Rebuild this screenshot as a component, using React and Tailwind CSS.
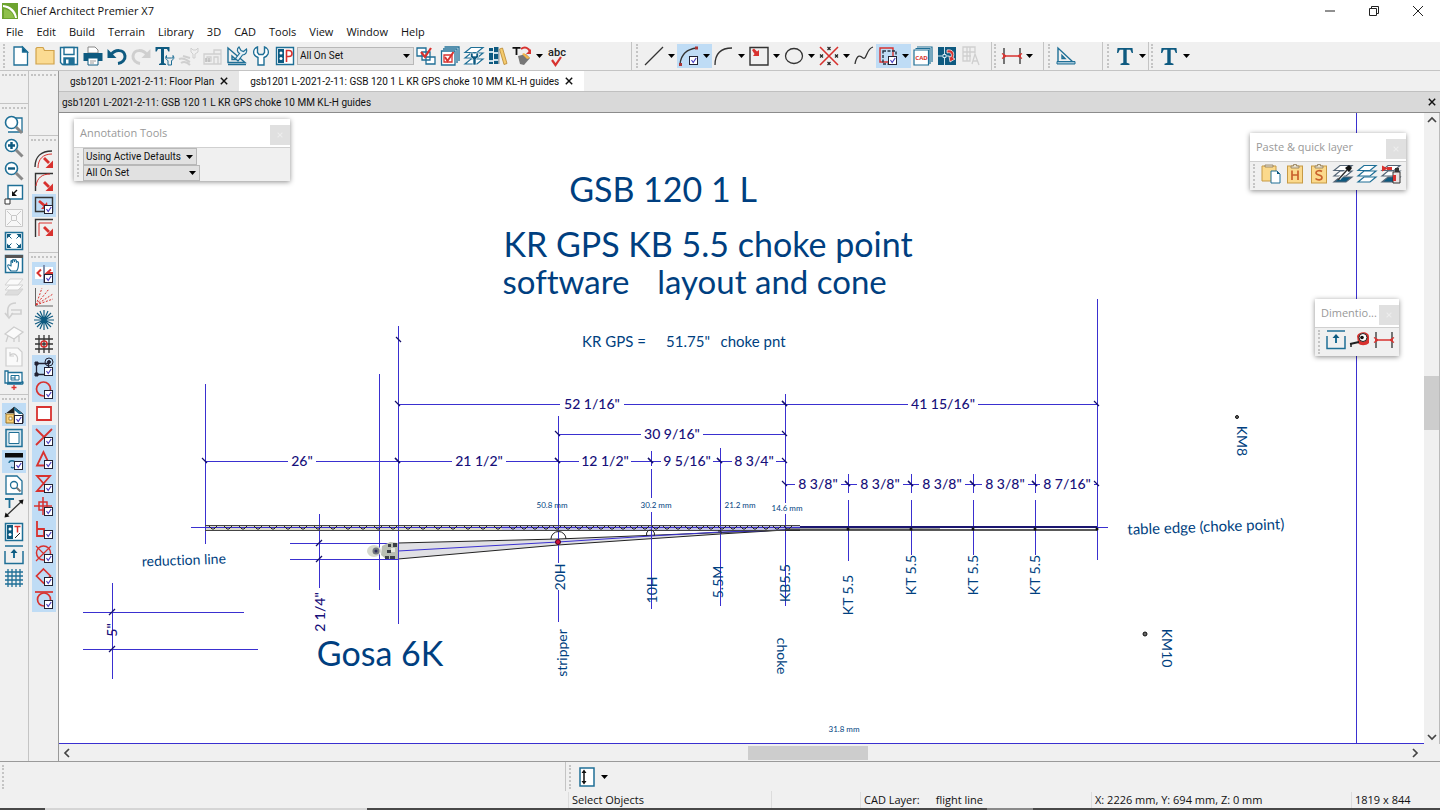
import { useState } from "react";
import clsx from "clsx";

const BLUE = "#1f6f96";
const DEEP = "#0e5a80";
const RED = "#d8322f";
const INK = "#333333";
const FADED = "#cfcfcf";

const UI = "font-['Open_Sans','Noto_Sans',sans-serif]";
const TABS = "font-[Roboto,'Noto_Sans',sans-serif]";

const Check = () => (
  <g>
    <rect x="12.5" y="12.5" width="8" height="8" fill="#fff" stroke="#223" strokeWidth="1" />
    <path d="M14.500 16l1.700 2.500 3-4.500" fill="none" stroke="#4a3fc0" strokeWidth="1.200" />
  </g>
);

const Sheets = ({ color = BLUE, fill = "#fff" }) => (
  <g stroke={color} strokeWidth="1.200">
    <path d="M3 20l6-5h12l-6 5z" fill={fill} />
    <path d="M3 14l6-5h12l-6 5z" fill="#fff" />
    <path d="M3 8.500l6-5h12l-6 5z" fill="#fff" />
  </g>
);

const Clip = ({ children }) => (
  <g>
    <rect x="4.500" y="4" width="15" height="17" fill="#fbd98c" stroke="#c79a45" />
    <path d="M8 6V4h2.500V2.500h3V4H16v2z" fill="#e9e2cf" stroke="#8d7a55" strokeWidth=".8" />
    {children}
  </g>
);

const wrench = "M8.500 3c-3 1-4.500 4-3.500 7 .6 1.600 2 2.800 4 3.500V21h6v-7.500c2-.7 3.400-1.900 4-3.500 1-3-.5-6-3.500-7v5.500L14 10.500h-4L8.500 8.500z";

const icons = {
  newFile: (
    <g stroke={BLUE} strokeWidth="1.300" fill="#fff">
      <path d="M5 3h8.500l5 5v13H5z" />
      <path d="M13.500 3v5h5z" fill={DEEP} />
    </g>
  ),
  open: <path d="M3 20V4.500l1-1h6l1.500 3H21V20z" fill="#fbdb92" stroke="#d0a24b" strokeWidth="1.200" />,
  save: (
    <g stroke={BLUE} strokeWidth="1.400" fill="#fff">
      <path d="M3.500 3.500h17v17h-15l-2-2z" />
      <path d="M7 3.500h10v7H7z" />
      <path d="M7 14h10v6.500H7z" fill={BLUE} />
      <path d="M9 15.500h2.500v4H9z" stroke="none" />
    </g>
  ),
  print: (
    <g>
      <path d="M7 9V3h7l3 3v3z" fill="#fff" stroke="#888" />
      <path d="M2.500 9h19v8h-19z" fill={DEEP} />
      <path d="M7 14h10v7H7z" fill="#fff" stroke={DEEP} />
      <path d="M9 17h6M9 19h4" stroke="#999" />
    </g>
  ),
  undo: (
    <g fill="none" stroke={DEEP} strokeWidth="3">
      <path d="M6 11c4-6 13-6 14 1 .5 4-3 7-7 7.500" />
      <path d="M2.500 5v9h9z" fill={DEEP} stroke="none" />
    </g>
  ),
  redo: (
    <g fill="none" stroke={FADED} strokeWidth="3">
      <path d="M18 11C14 5 5 5 4 12c-.5 4 3 7 7 7.500" />
      <path d="M21.500 5v9h-9z" fill={FADED} stroke="none" />
    </g>
  ),
  textTool: (
    <g fill={DEEP}>
      <path d="M2.500 3h14v4.500h-1.200L14 5h-3v14l2 1v1H6v-1l2-1V5H5L3.700 7.500H2.500z" />
      <path d="M13.500 11.500c-1.500 2-1 4 1.500 5v4.500h3.500v-4.500c2.500-1 3-3 1.500-5v2.500h-1.500-3.500-1.500z" fill="#eee" stroke={BLUE} />
    </g>
  ),
  deckTool: (
    <g fill="none" stroke={FADED}>
      <path d="M2 15c5-2 7 1 11 3M4 19c3-2 6-1 9 2M6 12l7 2" strokeWidth="2" />
      <path d="M14 4v4l2 2v4h2v-4l3-2V4l-2 2h-3z" />
    </g>
  ),
  houseTool: (
    <g fill="#eee" stroke={FADED} strokeWidth="1.300">
      <path d="M3 10h17v10H3zM6 13h4v4H6zM13 13h4v7h-4zM13 10V6h7v4" />
      <path d="M5 14v4M8 14v4" strokeWidth="1.500" stroke="#bbb" />
    </g>
  ),
  squareTool: (
    <g fill="none" stroke={BLUE} strokeWidth="1.400">
      <path d="M3 4v14.500h17zM7 12v3.500h4zM3 20.500h18" />
      <path d="M14 3c-2.500 2-2 5 .5 6.500l-4 5 2.500 2.500 4.500-6c3 0 5-3 4-6l-3 2.500-2.500-1z" strokeWidth="1.200" fill="#e7f0f5" />
    </g>
  ),
  wrench: <path d={wrench} fill="#fff" stroke={BLUE} strokeWidth="1.400" />,
  pageP: (
    <g>
      <path d="M3.500 3.500h17v17h-17z" fill="#fff" stroke={BLUE} strokeWidth="1.400" />
      <path d="M5 5h6v14H5z" fill={DEEP} />
      <circle cx="8" cy="9" r="1.500" fill="#fff" />
      <circle cx="8" cy="14.500" r="1.500" fill="#fff" />
      <path d="M13.500 18V6.500h2.500c4 0 4 6 0 6h-2" fill="none" stroke={RED} strokeWidth="1.600" />
    </g>
  ),
  selectSet: (
    <g fill="#fff" stroke={BLUE} strokeWidth="1.300">
      <path d="M3 4h9v8H3zM8 8h8v8H8zM12 13h9v7h-9z" />
      <path d="M7 8l4 5 6-9" fill="none" stroke={RED} strokeWidth="2.200" />
    </g>
  ),
  checkBox: (
    <g fill="#fff" stroke={BLUE} strokeWidth="1.300">
      <path d="M6.500 3h14.500v14M5 5h14v14M3.500 7h13.500v14H3.500z" />
      <path d="M6 11h8v7H6z" stroke={RED} />
      <path d="M7 13l2.500 4 6-9" fill="none" stroke={RED} strokeWidth="2" />
    </g>
  ),
  layerTool: (
    <g>
      <Sheets />
      <path d="M8.500 9v4l2.500 2v6h3v-6l2.500-2V9h-2.500v3h-3V9z" fill={DEEP} stroke="#fff" strokeWidth=".6" />
    </g>
  ),
  library: (
    <g>
      <path d="M3 4h4v16H3zM8 3h4.500v17H8z" fill={DEEP} />
      <path d="M3 8h4M8 9h4.500M3 17h4M8 16h4.500" stroke="#c8dfea" strokeWidth="2" />
      <path d="M13.500 5l3-1 4.500 15.500-3 1z" fill="#f4cb6e" stroke="#b98730" strokeWidth=".8" />
      <path d="M13 5v15" stroke="#999" />
    </g>
  ),
  textPaint: (
    <g>
      <path d="M2.500 3h8v1.800H7.400V11H5.600V4.800H2.500z" fill="#111" />
      <path d="M11 5c4-3 8-1 9 3" fill="none" stroke={RED} strokeWidth="2" />
      <path d="M21 5v5h-5z" fill={RED} />
      <path d="M8 12l8-2 4 4-6 7-4-1z" fill="#777" />
      <path d="M14 9l6 5-3 1-5-5z" fill="#f3b64c" />
    </g>
  ),
  spell: (
    <g>
      <text x="12" y="12" textAnchor="middle" fontSize="11" fontWeight="500" fill="#222" fontFamily="Roboto">abc</text>
      <path d="M7 16l3.500 5L16 13" fill="none" stroke={RED} strokeWidth="2.200" />
    </g>
  ),
  line: <path d="M3 21L21 3" stroke={INK} strokeWidth="1.300" />,
  arcEdit: (
    <g>
      <path d="M3 20C4 11 10 5 20 4" fill="none" stroke={INK} strokeWidth="1.300" />
      <path d="M2 19h3v3H2zM18 2.500h3v3h-3z" fill="#a33" />
      <Check />
    </g>
  ),
  arc: <path d="M3 21C3 10 9 4 20 4" fill="none" stroke={INK} strokeWidth="1.300" />,
  boxArrow: (
    <g>
      <path d="M3 3.500h18v17.500H3z" fill="none" stroke={INK} strokeWidth="1.400" />
      <path d="M5 6l2-1.500 3 3L12 6v6H6l1.500-2z" fill={RED} />
    </g>
  ),
  circle: <ellipse cx="12" cy="12" rx="8.500" ry="7.500" fill="none" stroke={INK} strokeWidth="1.300" />,
  cross: (
    <g fill="none">
      <path d="M3 3l18 18M21 3L3 21" stroke={RED} strokeWidth="1.600" />
      <path d="M10.500 3l3 3m0-3l-3 3M10.500 18l3 3m0-3l-3 3M3 10.500l3 3m0-3l-3 3M18 10.500l3 3m0-3l-3 3" stroke="#222" strokeWidth="1.200" />
    </g>
  ),
  spline: <path d="M3 20c2-11 6-8 8-6 4 2 3-9 10-11" fill="none" stroke={INK} strokeWidth="1.300" />,
  cadBlock: (
    <g fill="none">
      <path d="M4 4h13v14H4z" stroke={RED} strokeWidth="1.400" />
      <path d="M7 7h13v13H7z" stroke="#234" strokeWidth="1.400" strokeDasharray="3 1.500" />
      <Check />
    </g>
  ),
  cad: (
    <g fill="#fff" stroke={BLUE} strokeWidth="1.200">
      <path d="M6 3h15v15M4.500 4.500H19V20M3 6h14.500v15H3z" />
      <text x="10.500" y="16" textAnchor="middle" fontSize="6" fontWeight="700" fill={RED} stroke="none" fontFamily="Noto Sans">CAD</text>
    </g>
  ),
  cadDetail: (
    <g>
      <path d="M3 3h18v18H3z" fill={DEEP} />
      <path d="M3 12h5m3 0h3M9.500 3v7m0 4v7M8 10.500h3v3H8z" stroke="#cfe4ee" fill="none" />
      <path d="M12 6c6-1 8 3 6 8l2 1-5 3-1-6 2 1c1-3 0-5-4-4z" fill={RED} stroke="#fff" strokeWidth=".7" />
    </g>
  ),
  plotA: (
    <g fill="none" stroke={FADED} strokeWidth="1.300">
      <path d="M4 3h7v14H4zM4 8h12M4 12h8M11 3l5 0v6M8 3v14M13 20l3-10 4 11M14 17h5" />
    </g>
  ),
  dim: (
    <g fill="none">
      <path d="M4 4v16M20 4v16" stroke="#555" strokeWidth="1.600" />
      <path d="M3 12h18M2 9.500l4 2.500-4 2.500M22 9.500L18 12l4 2.500" stroke={RED} strokeWidth="1.400" />
    </g>
  ),
  triangle: (
    <g fill="none" stroke={BLUE} strokeWidth="1.400">
      <path d="M4 4v14h15zM8 11.500v3h3z" />
      <path d="M3 17.500h18v2.500H3z" fill="#9fc3d6" strokeWidth="1" />
    </g>
  ),
  bigT: <path d="M4.500 4h15l.5 5h-1.200l-1.500-3.200h-3.600v13l2.800 1V21h-9v-1.200l2.800-1v-13H6.700L5.200 9H4z" fill={DEEP} />,
  zoomArea: (
    <g>
      <path d="M8 5h12v14H6" fill="#fff" stroke={BLUE} strokeWidth="1.300" />
      <circle cx="9.500" cy="9.500" r="6" fill="#fff" stroke={BLUE} strokeWidth="1.600" />
      <path d="M14 14l6 6" stroke="#888" strokeWidth="3" />
    </g>
  ),
  zoomIn: (
    <g>
      <circle cx="9.500" cy="9.500" r="6" fill="#fff" stroke={BLUE} strokeWidth="1.600" />
      <path d="M6 9.500h7M9.500 6v7" stroke={DEEP} strokeWidth="2.400" />
      <path d="M14 14l6.500 6.500" stroke="#888" strokeWidth="3" />
    </g>
  ),
  zoomOut: (
    <g>
      <circle cx="9.500" cy="9.500" r="6" fill="#fff" stroke={BLUE} strokeWidth="1.600" />
      <path d="M6 9.500h7" stroke={DEEP} strokeWidth="2.400" />
      <path d="M14 14l6.500 6.500" stroke="#888" strokeWidth="3" />
    </g>
  ),
  shrink: (
    <g>
      <path d="M6 3.500h14.500V17H6z" fill="#fff" stroke={BLUE} strokeWidth="1.400" />
      <path d="M3 17h5v5H3z" fill="#fff" stroke={INK} />
      <path d="M15 8l-4 4" stroke="#111" strokeWidth="1.500" />
      <path d="M10 9v5h5z" fill="#111" />
    </g>
  ),
  fitOff: (
    <g fill="#f7f7f7" stroke="#c8c8c8">
      <path d="M3.500 3.500h17v17h-17z" />
      <path d="M9.500 9.500h5v5h-5zM5 5l4 4M19 5l-4 4M5 19l4-4M19 19l-4-4" />
    </g>
  ),
  fit: (
    <g>
      <path d="M3.500 3.500h17v17h-17z" fill="#fff" stroke={BLUE} strokeWidth="1.600" />
      <path d="M5 5h4.500L5 9.500zM19 5h-4.500l4.500 4.500zM5 19h4.500L5 14.500zM19 19h-4.500l4.500-4.500z" fill={DEEP} />
      <path d="M6 6l3.500 3.500M18 6l-3.500 3.500M6 18l3.500-3.500M18 18l-3.500-3.500" stroke={DEEP} />
    </g>
  ),
  pan: (
    <g>
      <path d="M3.500 3.500h17v17h-17z" fill="#fff" stroke={BLUE} strokeWidth="1.500" />
      <path d="M3 3h18v3H3z" fill="#555" />
      <path d="M9 19c-2-2-4-5-3-6s2 1 3 1V9c1-1 1.500 0 1.500 2V8c1-1 2 0 2 2V8c1-1 2 0 2 2v0c1-1 2 0 2 1 0 4 0 6-2 8z" fill="#fff" stroke={BLUE} strokeWidth="1.200" />
    </g>
  ),
  sheetsOff: (
    <g fill="#fafafa" stroke="#d3d3d3">
      <path d="M3 20l5-6h13l-5 6z" fill="#ddd" />
      <path d="M3 15l5-5h13l-5 5z" />
      <path d="M3 10l5-6h13l-5 6z" />
    </g>
  ),
  backOff: <path d="M14 4C6 4 5 9 6 17M3 14l4 5 4-5M9 11h10v4H9" fill="none" stroke={FADED} strokeWidth="1.600" />,
  planeOff: <path d="M3 12l9-7 9 5-9 7zM6 14l-2 6M17 14v6M12 17v3" fill="#fafafa" stroke="#cdcdcd" strokeWidth="1.300" />,
  cycleOff: (
    <g fill="#fafafa" stroke="#cdcdcd" strokeWidth="1.200">
      <path d="M4 3h12l4 4v14H4z" />
      <path d="M8 10c5-3 9 1 7 7M8 7v4h4" fill="none" />
    </g>
  ),
  blueprint: (
    <g fill="none" stroke={BLUE} strokeWidth="1.300">
      <path d="M3 3h3v12H3zM6 4.500h14v10H6zM20 13c2 1 1 4-1 3H5" fill="#fff" />
      <path d="M9 7.500h8v4.500H9zM13 7.500V12M9 10h4" strokeWidth="1" />
      <path d="M12 17v5M9.500 19.500h5" stroke={RED} />
    </g>
  ),
  house: (
    <g>
      <path d="M12 4l9 7v9h-9z" fill="#fff" stroke="#222" />
      <path d="M3 11l9-7v6H3z" fill="#222" />
      <path d="M4 11h8v9H4z" fill="#f7cf78" stroke="#9b7428" />
      <path d="M7 14h3v3H7z" fill="#fff" stroke="#9b7428" strokeWidth=".8" />
      <path d="M12 4l9 7h-4l-5-4z" fill={BLUE} />
      <Check />
    </g>
  ),
  frame: (
    <g fill="#fff" stroke={BLUE}>
      <path d="M4 3.500h16v17H4z" strokeWidth="1.500" fill="#d6e6ee" />
      <path d="M7 6.500h10v11H7z" />
    </g>
  ),
  refLine: (
    <g>
      <path d="M3 4h18v4.500H3z" fill="#0b0b0b" />
      <path d="M7 14c0-3 6-3 6 0M9 18c2 2 5 0 4-2" fill="none" stroke={BLUE} strokeWidth="1.300" />
      <Check />
    </g>
  ),
  preview: (
    <g fill="#fff" stroke={BLUE} strokeWidth="1.300">
      <path d="M4 3h11l5 5v13H4z" />
      <circle cx="12" cy="12" r="3.500" />
      <path d="M14.500 14.500l4 4" stroke="#777" strokeWidth="2" />
    </g>
  ),
  tLine: (
    <g>
      <path d="M3 3h9M7.500 3v9" stroke={BLUE} strokeWidth="1.800" />
      <path d="M4 20L20 5" stroke={INK} strokeWidth="1.300" />
      <path d="M2.500 21.500l1-5 4 4zM21.500 3.500l-1 5-4-4z" fill="#111" />
    </g>
  ),
  pageT: (
    <g>
      <path d="M3.500 3.500h17v17h-17z" fill="#fff" stroke={BLUE} strokeWidth="1.500" />
      <path d="M5 5h6v14H5z" fill={DEEP} />
      <circle cx="8" cy="9" r="1.500" fill="#fff" />
      <circle cx="8" cy="14.500" r="1.500" fill="#fff" />
      <path d="M12.500 6.500h6M15.500 6.500v6" stroke={RED} strokeWidth="1.500" />
      <path d="M13 18l5-5" stroke="#222" />
    </g>
  ),
  upBox: (
    <g fill="none" stroke={BLUE} strokeWidth="1.500">
      <path d="M3 3h18M3 8v12.500h18V8" />
      <path d="M12 15V8" strokeWidth="2" />
      <path d="M8.500 10L12 6l3.500 4z" fill={DEEP} stroke="none" />
    </g>
  ),
  grid: <path d="M6 3v18M10 3v18M14 3v18M18 3v18M3 6h18M3 10h18M3 14h18M3 18h18" stroke={BLUE} strokeWidth="1.300" />,
  arcA: (
    <g fill="none">
      <path d="M3 20C3 10 9 4 20 4" stroke={INK} strokeWidth="1.400" />
      <path d="M6 21C6 12 11 7 20 7" stroke={RED} />
      <path d="M12 11l5 5" stroke={RED} strokeWidth="2.800" />
      <path d="M21 21h-7.500l7.500-7.500z" fill={RED} />
    </g>
  ),
  arcB: (
    <g fill="none">
      <path d="M3.500 21V3.500H21" stroke={INK} strokeWidth="1.400" />
      <path d="M4 16C5 8 10 4 18 4" stroke={RED} />
      <path d="M12 12l5 5" stroke={RED} strokeWidth="2.800" />
      <path d="M21 21h-7.500l7.500-7.500z" fill={RED} />
    </g>
  ),
  boxRed: (
    <g fill="none">
      <path d="M3.500 4.500h17v14h-17z" stroke={INK} strokeWidth="1.400" />
      <path d="M7 8l6 5" stroke={RED} strokeWidth="2.800" />
      <path d="M16 16H9l6-7z" fill={RED} />
      <Check />
    </g>
  ),
  cornerB: (
    <g fill="none">
      <path d="M3.500 21V3.500H21" stroke={INK} strokeWidth="1.400" />
      <path d="M7 20V7h13" stroke={RED} />
      <path d="M12 11l5 5" stroke={RED} strokeWidth="2.800" />
      <path d="M21 20h-7.500l7.500-7.500z" fill={RED} />
    </g>
  ),
  mirror: (
    <g>
      <path d="M3 5h8v12H3zM13 5h8v12h-8z" fill="#fff" />
      <path d="M9 7.500L5.500 11 9 14.500M19 7.500L15 11h6" fill="none" stroke={RED} strokeWidth="2" />
      <path d="M12 3v18" stroke="#446" />
      <Check />
    </g>
  ),
  rays: (
    <g fill="none">
      <path d="M3.500 3v18H21" stroke="#666" />
      <path d="M4 20L10 3M4 20L17 4M4 20L21 9M4 20l17-6" stroke={RED} strokeDasharray="2 1.500" />
    </g>
  ),
  burst: <path d="M12 2v20M2 12h20M5 5l14 14M19 5L5 19M8 3l8 18M16 3L8 21M3 8l18 8M3 16l18-8" stroke={DEEP} strokeWidth="1.200" />,
  gridSnap: (
    <g fill="none">
      <path d="M7 3v18M12 3v18M17 3v18M3 7h18M3 12h18M3 17h18" stroke={INK} strokeWidth="1.300" />
      <circle cx="12" cy="12" r="3" stroke={RED} strokeWidth="1.500" />
    </g>
  ),
  objSnap: (
    <g fill="none" stroke="#223">
      <path d="M4.500 8.500h12v11h-12z" strokeWidth="1.300" />
      <path d="M3 7h3v3H3zM3 18h3v3H3z" fill="#223" />
      <circle cx="17" cy="7" r="4" />
      <circle cx="17" cy="7" r="1.500" fill="#223" />
      <Check />
    </g>
  ),
  snapCircle: <g><circle cx="11.500" cy="11" r="7" fill="none" stroke={RED} strokeWidth="1.700" /><Check /></g>,
  snapSquare: <path d="M5 5h14v13H5z" fill="#fff" stroke={RED} strokeWidth="1.800" />,
  snapX: <g><path d="M4 4l16 16M20 4L4 20" stroke={RED} strokeWidth="1.800" /><Check /></g>,
  snapTri: <g><path d="M11.500 4L5 17.500h13z" fill="none" stroke={RED} strokeWidth="1.800" /><Check /></g>,
  snapHour: <g><path d="M5 4h13L5 19h13z" fill="none" stroke={RED} strokeWidth="1.800" /><Check /></g>,
  snapPlus: (
    <g fill="none" stroke={RED} strokeWidth="1.500">
      <path d="M11 2v18M2 11h18M7 7h8v8H7z" />
      <Check />
    </g>
  ),
  snapPerp: (
    <g fill="none" stroke={RED} strokeWidth="1.800">
      <path d="M5 3v15h14M5 11h7v7" />
      <Check />
    </g>
  ),
  snapQuad: (
    <g fill="none" stroke={RED} strokeWidth="1.500">
      <circle cx="11.500" cy="11" r="7" />
      <path d="M4 4l15 15M19 4L4 19" strokeWidth="1.200" />
      <Check />
    </g>
  ),
  snapDiamond: <g><path d="M11.500 4l7 7-7 7-7-7z" fill="none" stroke={RED} strokeWidth="1.700" /><Check /></g>,
  snapTan: (
    <g fill="none" stroke={RED} strokeWidth="1.700">
      <path d="M3 4h18" />
      <circle cx="12" cy="11.500" r="6.500" />
      <Check />
    </g>
  ),
  paste: (
    <g>
      <path d="M3 4h14v15H3z" fill="#fbd98c" stroke="#c79a45" />
      <path d="M6 5h8V3H6z" fill="#e9e2cf" stroke="#8d7a55" strokeWidth=".8" />
      <path d="M12 9h6l3 3v9h-9z" fill="#fff" stroke={BLUE} />
      <path d="M18 9v3h3z" fill={DEEP} />
    </g>
  ),
  pasteH: <Clip><path d="M9 8.500V18M15 8.500V18M9 13h6" stroke="#c9602c" strokeWidth="1.700" /></Clip>,
  pasteS: <Clip><path d="M15 9.500c-2-1.500-6-1-6 1.500s6 1.500 6 4.500-4.500 3-6.500 1" fill="none" stroke="#c9602c" strokeWidth="1.600" /></Clip>,
  eyedrop: (
    <g>
      <Sheets fill={DEEP} color="#567" />
      <path d="M8 17l8-9" stroke="#fff" strokeWidth="3" />
      <path d="M7 18l9-10" stroke="#333" strokeWidth="1.500" />
      <path d="M14 6l4 4 3-4-3-3z" fill="#111" />
    </g>
  ),
  sheets: <Sheets />,
  spray: (
    <g>
      <Sheets fill={DEEP} color="#567" />
      <path d="M3 3.500l6 3-6 3zM8 5h5v3H8z" fill={RED} />
      <path d="M14 10h7v11h-7z" fill="#e9e2e2" stroke="#333" />
      <path d="M14 13h3v6h-3z" fill={RED} />
      <path d="M16 6h4v4h-4z" fill="#333" />
    </g>
  ),
  tape: (
    <g>
      <path d="M9 8c2-5 12-5 12 1v6c-3 3-9 3-11 0z" fill={RED} />
      <circle cx="15" cy="9.500" r="4" fill="#fff" stroke="#222" />
      <circle cx="14" cy="9.500" r="1.800" fill="#111" />
      <path d="M2 16l9-2" stroke="#222" strokeWidth="2" />
      <path d="M3 15v4" stroke="#222" strokeWidth="1.500" />
    </g>
  ),
  height: (
    <g>
      <path d="M5 3h14v18H5z" fill="#fff" stroke={BLUE} strokeWidth="1.500" />
      <path d="M9 6v12" stroke="#111" strokeWidth="1.500" />
      <path d="M6.500 8L9 4.500 11.500 8zM6.500 16L9 19.500l2.500-3.500z" fill="#111" />
    </g>
  ),
};

const Icon = ({ name }) => (
  <svg viewBox="0 0 24 24" className="h-6 w-6 shrink-0 overflow-visible" aria-hidden="true">
    {icons[name]}
  </svg>
);

const Caret = () => (
  <svg viewBox="0 0 7 4" className="h-1 w-[7px] shrink-0" aria-hidden="true">
    <path d="M0 0h7L3.500 4z" fill="#000" />
  </svg>
);

const Tool = ({ name, menu, on }) => (
  <button aria-label={name} className={clsx("flex h-6 items-center", menu ? "w-[35px] gap-0.5" : "w-6", on && "bg-[#bfdcf5]")}>
    <Icon name={name} />
    {menu && <Caret />}
  </button>
);

const Grip = () => <div className="mr-1 h-6 w-0 border-l-2 border-dotted border-[#c4c4c4]" />;
const HGrip = () => (
  <div className="px-0.5 py-[3px]">
    <div className="border-t-2 border-dotted border-[#c4c4c4]" />
  </div>
);

const Combo = ({ label, value, className }) => (
  <label className={clsx("relative flex items-center border border-[#b8b8b8] bg-[#e1e1e1]", className)}>
    <select aria-label={label} className={clsx("h-full w-full appearance-none px-0.5 text-[10px] leading-none text-[#111] outline-none", TABS)}>
      <option>{value}</option>
    </select>
    <span className="pointer-events-none absolute right-[3px] flex">
      <Caret />
    </span>
  </label>
);

const X = ({ className }) => (
  <svg viewBox="0 0 10 10" className={className} aria-hidden="true">
    <path d="M1 1l8 8M9 1L1 9" stroke="currentColor" strokeWidth="1.800" />
  </svg>
);

const menus = ["File", "Edit", "Build", "Terrain", "Library", "3D", "CAD", "Tools", "View", "Window", "Help"];

const fileTools = ["newFile", "open", "save", "print", "undo", "redo", "textTool", "deckTool", "houseTool", "squareTool", "wrench", "pageP"];

const leftTop = ["zoomArea", "zoomIn", "zoomOut", "shrink", "fitOff", "fit", "pan", "sheetsOff", "backOff", "planeOff", "cycleOff", "blueprint"];
const leftBottom = ["house", "frame", "refLine", "preview", "tLine", "pageT", "upBox", "grid"];
const editTools = ["arcA", "arcB", "boxRed", "cornerB"];
const snapTools = ["mirror", "rays", "burst", "gridSnap", "objSnap", "snapCircle", "snapSquare", "snapX", "snapTri", "snapHour", "snapPlus", "snapPerp", "snapQuad", "snapDiamond", "snapTan"];
const active = ["house", "refLine", "boxRed", "mirror", "objSnap", "snapCircle", "snapX", "snapTri", "snapHour", "snapPlus", "snapPerp", "snapQuad", "snapDiamond", "snapTan"];

const Stack = ({ names, className }) => (
  <div className={clsx("grid auto-rows-[minmax(0,1fr)] justify-center", className)}>
    {names.map((n) => (
      <button key={n} aria-label={n} className={clsx("flex w-6 items-center overflow-hidden", active.includes(n) && "bg-[#bfdcf5]")}>
        <Icon name={n} />
      </button>
    ))}
  </div>
);

// horizontal dimension strings: x1, x2, y, label, gap left for the label, label centre
const dims = [
  [398, 785, 404, '52 1/16"', 64, 592],
  [785, 1097, 404, '41 15/16"', 70, 943],
  [558, 785, 434, '30 9/16"', 62, 672],
  [205, 398, 461, '26"', 28, 302],
  [398, 558, 461, '21 1/2"', 54, 479],
  [558, 651, 461, '12 1/2"', 52, 605],
  [651, 720, 461, '9 5/16"', 52, 687],
  [720, 785, 461, '8 3/4"', 44, 754],
  [785, 848, 484, '8 3/8"', 46, 818],
  [848, 911, 484, '8 3/8"', 46, 880],
  [911, 973, 484, '8 3/8"', 46, 942],
  [973, 1035, 484, '8 3/8"', 46, 1005],
  [1035, 1097, 484, '8 7/16"', 54, 1067],
];

// plain construction lines: x1, y1, x2, y2
const lines = [
  [205, 384, 205, 544],
  [379, 374, 379, 590],
  [398, 326, 398, 624],
  [558, 416, 558, 563],
  [558, 590, 558, 622],
  [651, 451, 651, 466],
  [651, 469, 651, 498],
  [651, 512, 651, 609],
  [720, 448, 720, 606],
  [785, 394, 785, 503],
  [785, 514, 785, 606],
  [848, 474, 848, 493],
  [848, 500, 848, 561],
  [911, 474, 911, 493],
  [911, 500, 911, 555],
  [973, 474, 973, 493],
  [973, 500, 973, 555],
  [1035, 474, 1035, 493],
  [1035, 500, 1035, 555],
  [1097, 299, 1097, 560],
  [1356, 113, 1356, 745],
  [59, 743, 1424, 743],
  [191, 527, 1108, 527],
  [83, 612, 244, 612],
  [83, 649, 258, 649],
  [112, 583, 112, 679],
  [319, 514, 319, 588],
  [290, 543, 398, 543],
  [290, 559, 398, 559],
];

const ticks = [[112, 612], [112, 649], [319, 543], [319, 559]];

// notes: text, centre x, baseline y, size, rotation
const notes = [
  ["GSB 120 1 L", 663, 202, 34],
  ["KR GPS KB 5.5 choke point", 708, 257, 34],
  ["software", 566, 294, 33],
  ["layout and cone", 772, 294, 33],
  ["KR GPS =", 614, 347, 15],
  ['51.75"', 688, 347, 15],
  ["choke pnt", 753, 347, 15],
  ["Gosa 6K", 380, 666, 34],
  ["table edge (choke point)", 1206, 532, 15, -2],
  ["reduction line", 184, 565, 14, -2],
  ["50.8 mm", 552, 508, 8],
  ["30.2 mm", 656, 508, 8],
  ["21.2 mm", 740, 508, 8],
  ["14.6 mm", 787, 511, 8],
  ["31.8 mm", 844, 732, 8],
  ["20H", 565, 577, 14, -90],
  ["10H", 657, 590, 14, -90],
  ["5.5M", 723, 582, 14, -90],
  ["KB5.5", 790, 583, 14, -90],
  ["KT 5.5", 853, 595, 14, -90],
  ["KT 5.5", 916, 575, 14, -90],
  ["KT 5.5", 978, 575, 14, -90],
  ["KT 5.5", 1040, 575, 14, -90],
  ["stripper", 567, 653, 14, -90],
  ["choke", 777, 656, 14, 90],
  ["KM8", 1237, 441, 14, 90],
  ["KM10", 1162, 648, 14, 90],
];

const Scallops = () => {
  const arcs = [];
  for (let x = 209; x < 790; x += x < 500 ? 15 : 11) {
    arcs.push(`M${x} 526l3 3h2l3-3`);
  }
  return <path d={arcs.join("")} fill="none" stroke="#222" />;
};

const Drawing = () => (
  <svg
    viewBox="59 113 1365 631"
    className="block w-full bg-white [font-variant-ligatures:none]"
    fontFamily="Lato, 'Noto Sans', sans-serif"
  >
    <rect x="205" y="525" width="297" height="5" fill="#d9d9cb" />
    <rect x="502" y="525" width="298" height="5" fill="#c0bfdf" />
    <path d="M398 543L558 539 651 536 785 530 720 534 558 545 398 559z" fill="#e0e0e4" />
    <path d="M398 543L558 539 785 530M398 559L558 545 720 534 785 530" fill="none" stroke="#222" />
    <g fill="none" stroke="#3a30d0" strokeWidth="1" shapeRendering="crispEdges">
      {lines.map(([x1, y1, x2, y2], i) => (
        <line key={i} x1={x1} y1={y1} x2={x2} y2={y2} />
      ))}
      {dims.map(([x1, x2, y, , gap, cx], i) => (
        <path key={i} d={`M${x1} ${y}H${cx - gap / 2}M${cx + gap / 2} ${y}H${x2}`} />
      ))}
    </g>
    <path d="M398 551L558 542 651 536 720 532 785 530" fill="none" stroke="#3a30d0" />
    <path d="M205 525.500H800M205 530.500H800" stroke="#444" />
    <Scallops />
    <path d="M800 527H1097" stroke="#1b1670" strokeWidth="2" />
    <path d="M785 530H1097" stroke="#222" strokeWidth="1.500" />
    <path d="M785 529H940" stroke="#444" />
    <path d="M551 539a7.500 7.500 0 0 1 15 0M647 536a4 4 0 1 1 7 0M718 531h3v3" fill="none" stroke="#222" />
    <circle cx="558" cy="542" r="2.500" fill="#d0103a" stroke="#402" />
    {[848, 911, 973, 1035, 1097].map((x) => (
      <circle key={x} cx={x} cy="529" r="1.500" fill="#111" />
    ))}
    <g>
      <ellipse cx="374" cy="551" rx="7" ry="6" fill="#d6d9ce" />
      <path d="M382 546l8-4 8 1v16h-12l-5-4z" fill="#b9bfb3" />
      <circle cx="376" cy="551" r="3.500" fill="#70747c" />
      <circle cx="376" cy="551" r="1.500" fill="#2c2c58" />
      <path d="M388 544h3v3h-3zM393 543h4v4h-4zM387 550h4v3h-4zM385 556h4v3h-4zM390 556h5v3h-5z" fill="#3c4145" />
      <path d="M391 548h4v4h-4z" fill="#e8ebe0" />
    </g>
    <g stroke="#15106a" strokeWidth="1.200">
      {dims.map(([x1, x2, y], i) => (
        <path key={i} d={`M${x1 - 3} ${y - 3}l5 5M${x2 - 3} ${y - 3}l5 5`} />
      ))}
      <path d="M396 337l5 5" />
      {ticks.map(([x, y]) => (
        <path key={`${x}-${y}`} d={`M${x - 3} ${y + 3}l6-6`} />
      ))}
    </g>
    <g fill="#17107a" fontSize="14" fontWeight="500" textAnchor="middle">
      {dims.map(([, , y, label, , cx], i) => (
        <text key={i} x={cx} y={y + 5}>{label}</text>
      ))}
      <text transform="translate(117 630) rotate(-90)">5"</text>
      <text transform="translate(325 612) rotate(-90)">2 1/4"</text>
    </g>
    <g fill="#003f80" textAnchor="middle">
      {notes.map(([t, x, y, size, rot = 0], i) => (
        <text key={i} transform={`translate(${x} ${y}) rotate(${rot})`} fontSize={size}>{t}</text>
      ))}
    </g>
    <g fill="#666" stroke="#111">
      <circle cx="1237" cy="417" r="1.500" />
      <circle cx="1145" cy="634" r="2" />
    </g>
  </svg>
);

const Palette = ({ title, className, children }) => (
  <section className={clsx("absolute bg-[#f0f0f0] shadow-[0_1px_5px_rgba(0,0,0,0.45)]", className)}>
    <header className="flex h-7 items-center justify-between bg-white pl-1.5">
      <h2 className={clsx("whitespace-nowrap text-[11px] text-[#999]", UI)}>{title}</h2>
      <button aria-label={`Close ${title}`} className="mt-1 flex h-5 w-5 shrink-0 items-center justify-center bg-[#e0e0e0] text-[#ececec]">
        <X className="h-1.5 w-1.5" />
      </button>
    </header>
    <div className="flex items-center border-t border-[#d0d0d0] pl-[3px]">{children}</div>
  </section>
);

const Chevron = ({ d }) => (
  <svg viewBox="0 0 10 10" className="h-2.5 w-2.5" aria-hidden="true">
    <path d={d} fill="none" stroke="#444" strokeWidth="1.700" />
  </svg>
);

const tabs = ["gsb1201 L-2021-2-11: Floor Plan", "gsb1201 L-2021-2-11: GSB 120 1 L KR GPS choke 10 MM KL-H guides"];

export default function App() {
  const [tab, setTab] = useState(1);

  return (
    <div className={clsx("flex min-h-screen flex-col bg-[#f0f0f0] text-[#111]", UI)}>
      <header className="flex h-[22px] items-center bg-white pl-0.5">
        <svg viewBox="0 0 16 16" className="h-4 w-4" aria-hidden="true">
          <path d="M0 0h16v16H0z" fill="#6da32f" />
          <path d="M1 2c8 1 13 5 14 13h-2C12 9 7 5 1 4z" fill="#fff" />
          <path d="M2 6c6 1 9 4 10 9H2z" fill="#8fc04a" />
        </svg>
        <h1 className="ml-0.5 text-[11px]">Chief Architect Premier X7</h1>
        <div className="ml-auto flex items-center">
          <button aria-label="Minimize" className="flex w-11 justify-center">
            <svg viewBox="0 0 10 10" className="h-2.5 w-2.5"><path d="M0 5h10" stroke="#222" /></svg>
          </button>
          <button aria-label="Restore" className="flex w-11 justify-center">
            <svg viewBox="0 0 10 10" className="h-2.5 w-2.5" fill="none" stroke="#222"><path d="M.5 2.500h7v7h-7zM2.500 2.500v-2h7v7h-2" /></svg>
          </button>
          <button aria-label="Close" className="flex w-11 justify-center">
            <svg viewBox="0 0 10 10" className="h-2.5 w-2.5"><path d="M0 0l10 10M10 0L0 10" stroke="#222" /></svg>
          </button>
        </div>
      </header>

      <nav className="flex h-5 items-center gap-[13px] bg-white pl-1.5 text-[11px]">
        {menus.map((m) => (
          <button key={m}>{m}</button>
        ))}
      </nav>

      <div className="flex h-[29px] items-center border-b border-[#c4c4c4] pl-[3px]">
        <Grip />
        {fileTools.map((n) => (
          <Tool key={n} name={n} />
        ))}
        <Combo label="Layer set" value="All On Set" className="h-[18px] w-[117px]" />
        <Tool name="selectSet" />
        <Tool name="checkBox" />
        <Tool name="layerTool" />
        <Tool name="library" />
        <Tool name="textPaint" menu />
        <Tool name="spell" />
        <div className="ml-[62px] mr-1 h-full border-l border-[#c4c4c4]" />
        <Grip />
        <Tool name="line" menu />
        <Tool name="arcEdit" menu on />
        <Tool name="arc" menu />
        <Tool name="boxArrow" menu />
        <Tool name="circle" menu />
        <Tool name="cross" menu />
        <Tool name="spline" />
        <Tool name="cadBlock" menu on />
        <Tool name="cad" />
        <Tool name="cadDetail" />
        <Tool name="plotA" />
        <div className="ml-2 mr-0.5 h-full border-l border-[#c4c4c4]" />
        <Grip />
        <Tool name="dim" menu />
        <div className="ml-2 mr-1 h-full border-l border-[#c4c4c4]" />
        <Grip />
        <Tool name="triangle" />
        <div className="ml-6 mr-1 h-full border-l border-[#c4c4c4]" />
        <Grip />
        <Tool name="bigT" menu />
        <div className="mr-0.5 h-full border-l border-[#c4c4c4]" />
        <Grip />
        <Tool name="bigT" menu />
      </div>

      <div className="flex flex-1 border-b border-[#9a9a9a]">
        <aside className="w-[29px] shrink-0 border-r border-[#c4c4c4]">
          <div className="h-8"><HGrip /></div>
          <div className="h-[10px] border-t border-[#c4c4c4]"><HGrip /></div>
          <Stack names={leftTop} className="h-[279px]" />
          <div className="mt-0.5 h-[9px] border-t border-[#c4c4c4]"><HGrip /></div>
          <Stack names={leftBottom} className="h-[187px]" />
        </aside>
        <aside className="w-[30px] shrink-0 border-r border-[#999]">
          <div className="h-16"><HGrip /></div>
          <div className="h-3 border-t border-[#c4c4c4]"><HGrip /></div>
          <Stack names={editTools} className="h-[93px]" />
          <div className="mt-3 h-[10px] border-t border-[#c4c4c4]"><HGrip /></div>
          <Stack names={snapTools} className="h-[350px]" />
        </aside>

        <main className="flex min-w-0 flex-1 flex-col">
          <div className={clsx("flex h-5 text-[10px]", TABS)}>
            {tabs.map((t, i) => (
              <div key={t} className={clsx("flex items-center gap-1.5 px-[11px]", tab === i ? "bg-white" : "bg-[#e6e6e6]")}>
                <button onClick={() => setTab(i)} className="whitespace-nowrap">{t}</button>
                <button aria-label={`Close ${t}`}><X className="h-2 w-2" /></button>
              </div>
            ))}
          </div>
          <div className={clsx("flex h-[22px] items-center justify-between border-b border-t border-b-[#8c8c8c] border-t-[#c0c0c0] bg-[#d9d9d9] pl-[3px] pr-1 text-[10px]", TABS)}>
            <span>{tabs[1]}</span>
            <button aria-label="Close view"><X className="h-2 w-2" /></button>
          </div>

          <div className="flex">
            <div className="relative min-w-0 flex-1">
              <Drawing />
              <Palette title="Annotation Tools" className="left-[15px] top-1.5 w-[216px]">
                <Grip />
                <div>
                  <Combo label="Defaults" value="Using Active Defaults" className="h-[17px] w-[114px]" />
                  <Combo label="Layers" value="All On Set" className="h-4 w-[117px]" />
                </div>
              </Palette>
              <Palette title="Paste & quick layer" className="right-[18px] top-5 w-[156px]">
                <Grip />
                <div className="mb-1 flex h-6 items-center">
                  {["paste", "pasteH", "pasteS", "eyedrop", "sheets", "spray"].map((n) => (
                    <Tool key={n} name={n} />
                  ))}
                </div>
              </Palette>
              <Palette title="Dimentio..." className="right-[25px] top-[186px] w-[84px]">
                <Grip />
                <div className="mb-1 flex h-6 items-center">
                  {["upBox", "tape", "dim"].map((n) => (
                    <Tool key={n} name={n} />
                  ))}
                </div>
              </Palette>
            </div>
            <div className="flex w-4 shrink-0 flex-col items-center justify-between border-r border-[#bbb] py-0.5">
              <button aria-label="Scroll up"><Chevron d="M1 7l4-4 4 4" /></button>
              <div className="mb-[52px] h-[54px] w-full bg-[#cdcdcd]" />
              <button aria-label="Scroll down"><Chevron d="M1 3l4 4 4-4" /></button>
            </div>
          </div>
          <div className="flex flex-1 items-center justify-between pl-[3px] pr-5">
            <button aria-label="Scroll left"><Chevron d="M7 1L3 5l4 4" /></button>
            <div className="ml-[133px] h-3.5 w-[120px] bg-[#cdcdcd]" />
            <button aria-label="Scroll right"><Chevron d="M3 1l4 4-4 4" /></button>
          </div>
        </main>
      </div>

      <div className="flex h-[29px] items-center pl-0.5">
        <Grip />
        <div className="ml-[557px] mr-[3px] h-full border-l border-[#c4c4c4]" />
        <Grip />
        <Tool name="height" menu />
      </div>
      <footer className="flex h-[17px] items-end text-[11px] leading-4">
        <span className="ml-[568px] w-[203px] border-l border-[#dcdcdc] pl-[3px]">Select Objects</span>
        <span className="h-full w-[89px] border-l border-[#dcdcdc]" />
        <span className="flex w-[231px] gap-4 border-l border-[#dcdcdc] pl-[3px]">
          <span>CAD Layer:</span>
          <span>flight line</span>
        </span>
        <span className="flex-1 border-l border-[#dcdcdc] pl-[3px]">X: 2226 mm, Y: 694 mm, Z: 0 mm</span>
        <span className="w-[89px] border-l border-[#dcdcdc] pl-[3px]">1819 x 844</span>
      </footer>
      <div className="flex h-0.5 bg-[#484848]">
        <div className="ml-[45px] w-[322px] bg-[#d5d5d5]" />
        <div className="ml-[620px] w-[46px] bg-[#8a8a8a]" />
      </div>
    </div>
  );
}
